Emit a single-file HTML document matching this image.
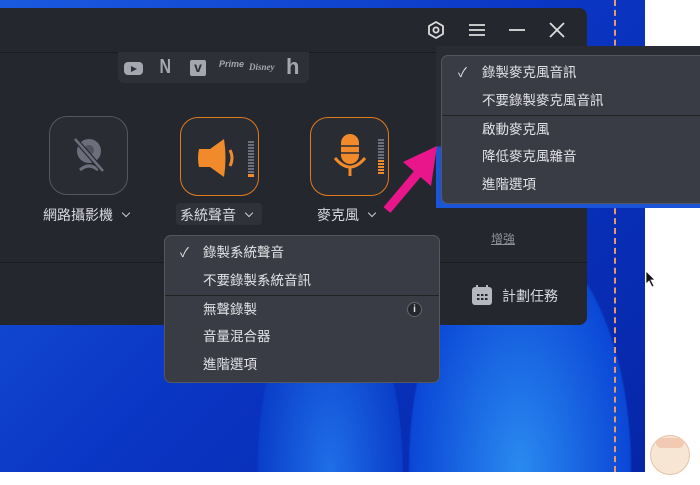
<!DOCTYPE html>
<html><head><meta charset="utf-8"><style>
*{margin:0;padding:0;box-sizing:border-box}
body{width:700px;height:485px;overflow:hidden;background:#fff;position:relative;font-family:"Liberation Sans","Noto Sans CJK TC",sans-serif;color:#d8d9de}
.abs{position:absolute}
#wall{left:0;top:0;width:645px;height:472px;background:radial-gradient(ellipse 120px 300px at 330px 470px,#1f6ee8 0,#0a3ec9 60%,transparent 61%),radial-gradient(ellipse 200px 420px at 520px 470px,#2a8af0 0,#0b47d6 55%,transparent 56%),linear-gradient(135deg,#1a5be0 0%,#0a36c4 50%,#0626a8 100%)}
#win{left:0;top:8px;width:587px;height:317px;background:#25272f;border-radius:0 8px 8px 0}
.menu{background:#3a3c45;border:1px solid #55575f;border-radius:7px;font-size:13.5px;color:#e2e3e7}
.menu div{position:absolute;left:0;right:0;height:28px;line-height:28px}
.sep{border-top:1px solid #222;}
.box{width:79px;height:79px;border-radius:18px;background:#2a2c34}
.chev{display:inline-block;width:6px;height:6px;border-right:1.3px solid #ccc;border-bottom:1.3px solid #ccc;transform:rotate(45deg);margin-left:10px;vertical-align:4px}
</style></head><body>
<div id="wall" class="abs"></div>
<div class="abs" style="left:614px;top:0;height:472px;border-left:2px dashed #e89a6a"></div>
<div id="win" class="abs">
 <div class="abs" style="left:0;top:44px;width:587px;border-top:1px solid #1b1c22"></div>
 <div class="abs" style="left:0;top:254px;width:587px;border-top:1px solid #1b1c22"></div>
 <svg class="abs" style="left:426px;top:12px" width="20" height="20" viewBox="0 0 20 20"><polygon points="10,2 17,6 17,14 10,18 3,14 3,6" fill="none" stroke="#ddd" stroke-width="1.8" stroke-linejoin="round"/><circle cx="10" cy="10" r="2.6" fill="none" stroke="#ddd" stroke-width="1.8"/></svg>
 <svg class="abs" style="left:468px;top:14px" width="18" height="16"><path d="M1 3h16M1 8h16M1 13h16" stroke="#ddd" stroke-width="1.8"/></svg>
 <svg class="abs" style="left:508px;top:14px" width="18" height="16"><path d="M1 8h16" stroke="#ddd" stroke-width="1.8"/></svg>
 <svg class="abs" style="left:548px;top:13px" width="18" height="18"><path d="M2 2L16 16M16 2L2 16" stroke="#ddd" stroke-width="1.8"/></svg>
 <div class="abs" style="left:118px;top:44px;width:191px;height:31px;background:#2e3038;border-radius:0 0 6px 6px;color:#a4a7b0;font-weight:bold">
  <div class="abs" style="left:6px;top:10px;width:19px;height:13px;background:#a4a7b0;border-radius:4px"></div>
  <svg class="abs" style="left:12px;top:13px" width="8" height="8"><polygon points="1,1 7,4 1,7" fill="#2e3038"/></svg>
  <div class="abs" style="left:40px;top:4px;font-size:20px;transform:scaleX(0.8)">N</div>
  <div class="abs" style="left:72px;top:8px;width:16px;height:16px;background:#a4a7b0;border-radius:2px;color:#2e3038;font-size:14px;line-height:15px;text-align:center">v</div>
  <div class="abs" style="left:101px;top:7px;font-size:9px;font-style:italic">Prime</div>
  <div class="abs" style="left:131px;top:10px;font-size:9px;font-style:italic;font-family:'Liberation Serif'">Disney</div>
  <div class="abs" style="left:168px;top:2px;font-size:22px">h</div>
 </div>
 <div class="abs box" style="left:49px;top:108px;border:1px solid #55575f">
  <svg class="abs" style="left:20px;top:18px" width="40" height="40" viewBox="0 0 40 40"><circle cx="19" cy="16" r="12" fill="#6c6f7b"/><circle cx="19" cy="15" r="5" fill="#50535e"/><path d="M10 35 Q19 27 28 35" stroke="#6c6f7b" stroke-width="3" fill="none"/><path d="M5 4L33 36" stroke="#2a2c34" stroke-width="5"/><path d="M5 4L33 36" stroke="#6c6f7b" stroke-width="2.5"/></svg>
 </div>
 <div class="abs" style="left:43px;top:197px;font-size:14px">網路攝影機<span class="chev"></span></div>
 <div class="abs box" style="left:180px;top:109px;border:1.5px solid #e07a1c">
  <svg class="abs" style="left:15px;top:18px" width="48" height="44" viewBox="0 0 48 44"><path d="M3 13 Q1 22 3 31 H14 L28 41 Q31 22 28 3 L14 13 Z" fill="#f08a2a"/><path d="M34 14 Q38 22 34 30" stroke="#f08a2a" stroke-width="3" fill="none"/></svg>
  <div class="abs" style="left:67px;top:23px;width:6px;height:36px;background:repeating-linear-gradient(#6c6f7b 0 2px,transparent 2px 3px)"></div>
  <div class="abs" style="left:67px;top:56px;width:6px;height:3px;background:#f08a2a"></div>
 </div>
 <div class="abs" style="left:176px;top:195px;width:86px;height:22px;background:#30323a;border-radius:4px"></div>
 <div class="abs" style="left:180px;top:197px;font-size:14px">系統聲音<span class="chev"></span></div>
 <div class="abs box" style="left:310px;top:109px;border:1.5px solid #e07a1c">
  <svg class="abs" style="left:20px;top:14px" width="40" height="48" viewBox="0 0 40 48"><rect x="10" y="2" width="18" height="30" rx="9" fill="#f08a2a"/><path d="M10 14h18M10 21h18" stroke="#2a2c34" stroke-width="1.5"/><path d="M4 26 Q19 44 34 26" stroke="#f08a2a" stroke-width="3" fill="none"/><path d="M19 36v8" stroke="#f08a2a" stroke-width="3"/></svg>
  <div class="abs" style="left:67px;top:21px;width:6px;height:36px;background:repeating-linear-gradient(#6c6f7b 0 2px,transparent 2px 3px)"></div>
  <div class="abs" style="left:67px;top:42px;width:6px;height:15px;background:repeating-linear-gradient(#f08a2a 0 2px,transparent 2px 3px)"></div>
 </div>
 <div class="abs" style="left:317px;top:197px;font-size:14px">麥克風<span class="chev"></span></div>
 <div class="abs" style="left:491px;top:222px;font-size:12px;color:#8f929b;text-decoration:underline">增強</div>
 <svg class="abs" style="left:471px;top:276px" width="22" height="22"><rect x="1" y="3" width="20" height="18" rx="3" fill="#b6b8c0"/><path d="M6 1v4M16 1v4" stroke="#b6b8c0" stroke-width="2"/><g fill="#25272f"><rect x="6" y="10" width="2.5" height="2"/><rect x="10" y="10" width="2.5" height="2"/><rect x="14" y="10" width="2.5" height="2"/><rect x="6" y="14" width="2.5" height="2"/><rect x="10" y="14" width="2.5" height="2"/><rect x="14" y="14" width="2.5" height="2"/></g></svg>
 <div class="abs" style="left:502px;top:278px;font-size:14px">計劃任務</div>
</div>
<div class="abs" style="left:436px;top:46px;width:264px;height:162px;background:linear-gradient(180deg,#2a2c34 0 62%,#1a55d8 62%)"></div>
<div class="abs menu" style="left:441px;top:55px;width:270px;height:149px">
 <div style="top:3px"><span style="position:absolute;left:16px;font-size:13px">✓</span><span style="position:absolute;left:40px">錄製麥克風音訊</span></div>
 <div style="top:31px"><span style="position:absolute;left:40px">不要錄製麥克風音訊</span></div>
 <div class="sep" style="top:59px"><span style="position:absolute;left:40px">啟動麥克風</span></div>
 <div style="top:87px"><span style="position:absolute;left:40px">降低麥克風雜音</span></div>
 <div style="top:115px"><span style="position:absolute;left:40px">進階選項</span></div>
</div>
<div class="abs menu" style="left:164px;top:235px;width:276px;height:148px">
 <div style="top:3px"><span style="position:absolute;left:15px;font-size:13px">✓</span><span style="position:absolute;left:38px">錄製系統聲音</span></div>
 <div style="top:31px"><span style="position:absolute;left:38px">不要錄製系統音訊</span></div>
 <div class="sep" style="top:59px"><span style="position:absolute;left:38px">無聲錄製</span><span style="position:absolute;left:242px;top:6px;width:15px;height:15px;border-radius:50%;background:#25272f;border:1px solid #666;font-size:10px;line-height:13px;text-align:center;font-weight:bold">i</span></div>
 <div style="top:87px"><span style="position:absolute;left:38px">音量混合器</span></div>
 <div style="top:115px"><span style="position:absolute;left:38px">進階選項</span></div>
</div>
<svg class="abs" style="left:375px;top:140px" width="70" height="80"><path d="M12 70 L44 32" stroke="#e8168a" stroke-width="9"/><polygon points="62,6 28,22 56,46" fill="#e8168a"/></svg>
<svg class="abs" style="left:645px;top:270px" width="12" height="18"><path d="M1 1 V14 L4 11 L7 17 L9 16 L6 10 L10 10 Z" fill="#111" stroke="#fff" stroke-width="0.8"/></svg>
<div class="abs" style="left:650px;top:435px;width:40px;height:40px;border-radius:50%;background:#f7e6d4;border:1px solid #e4c2a6"></div>
<div class="abs" style="left:656px;top:438px;width:28px;height:10px;border-radius:6px;background:#f2c9b1"></div>
</body></html>
